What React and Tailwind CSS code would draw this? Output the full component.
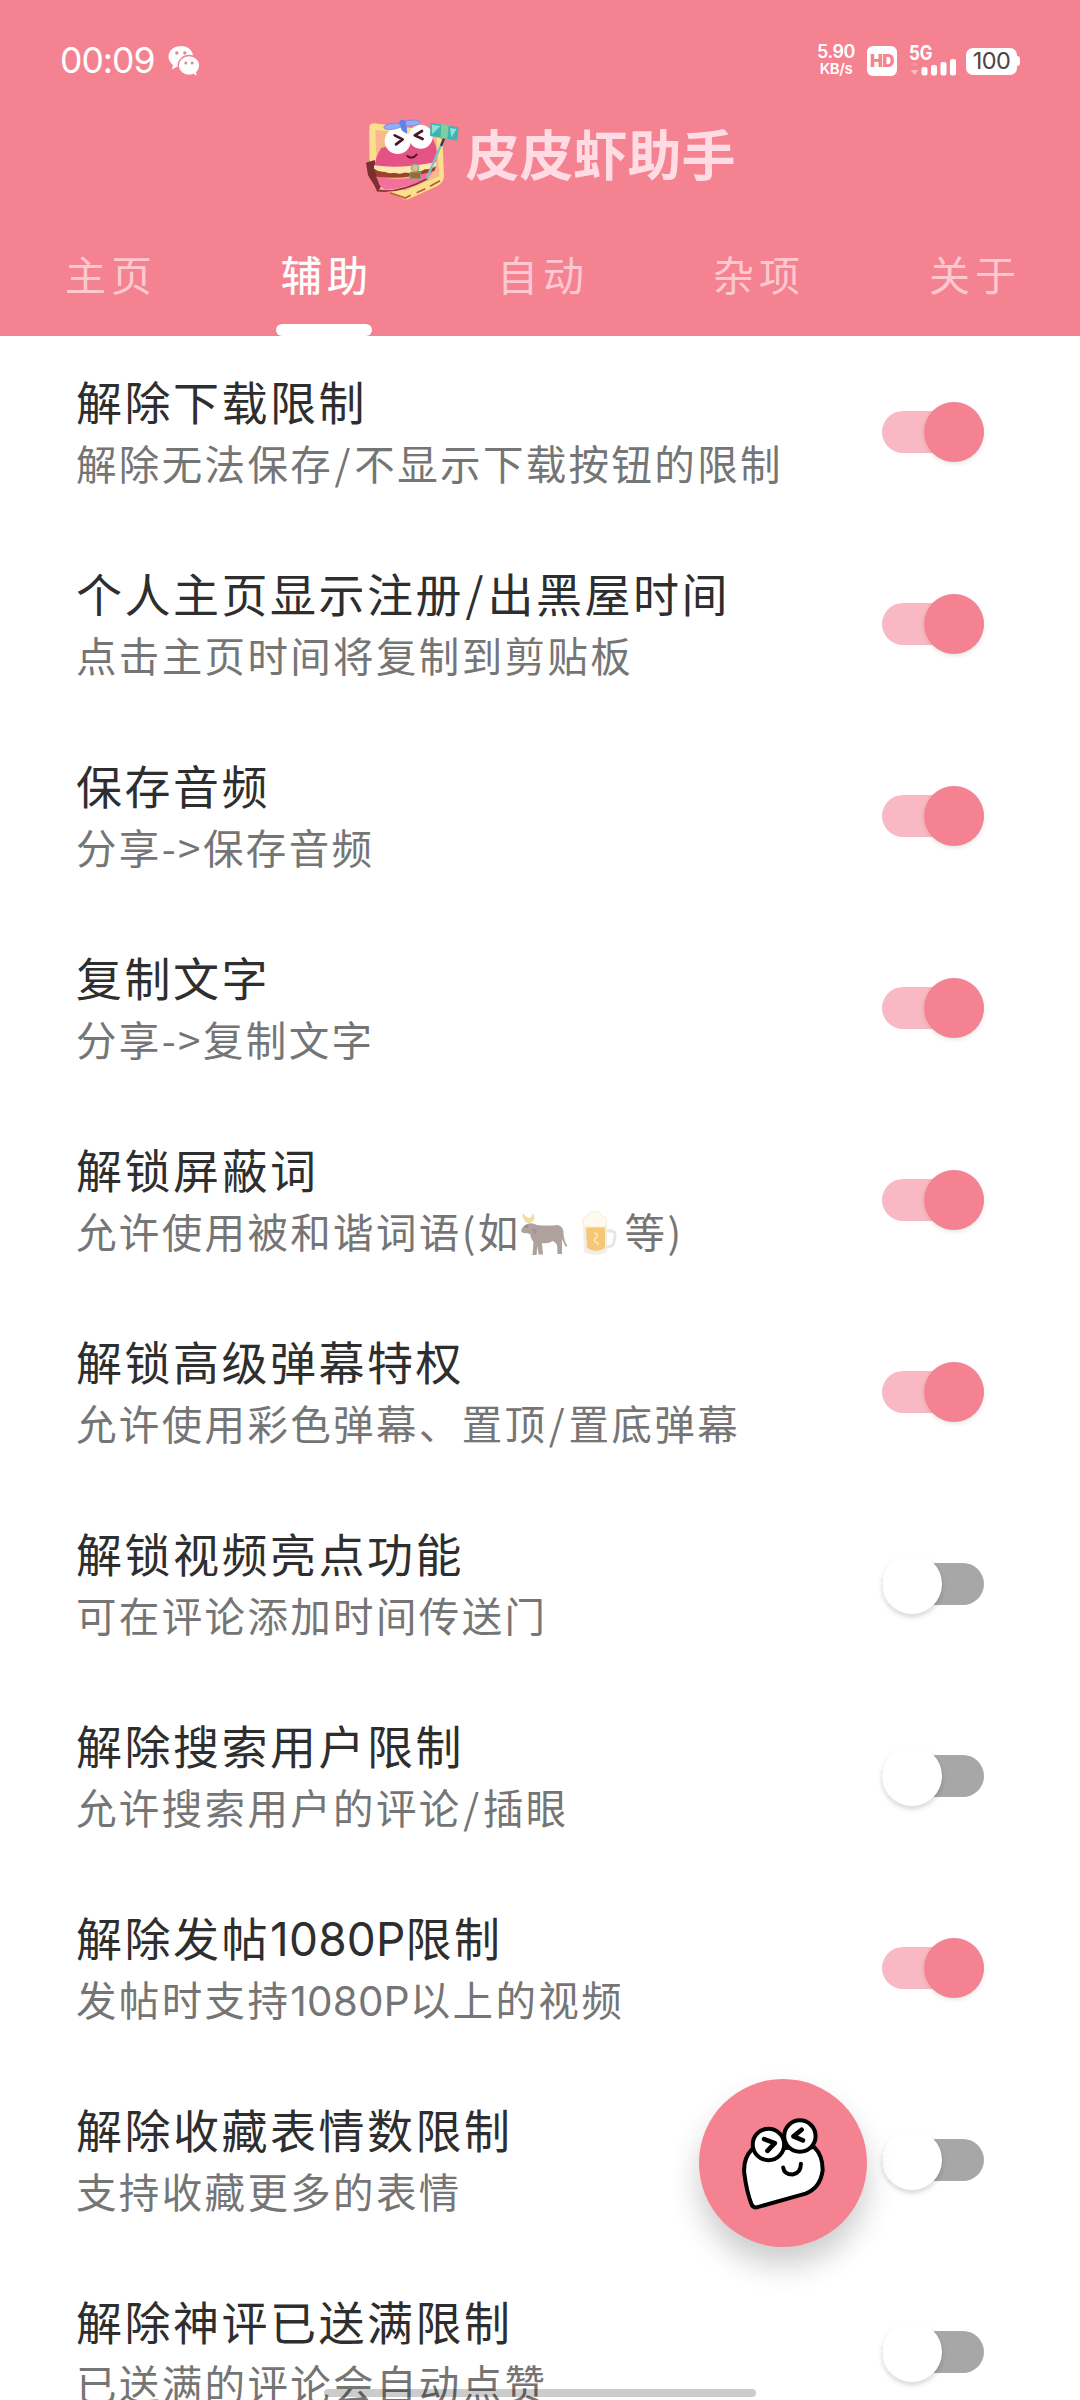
import React, { useState } from "react";

const tabs = ["主页", "辅助", "自动", "杂项", "关于"];

const OxIcon = () => (
  <svg
    viewBox="0 0 48 44"
    className="inline-block w-[48px] h-[44px] -ml-[1px] mr-[1px] -mt-[6px] opacity-60"
  >
    <path
      d="M1 19 Q2 14 7 12 Q12 10 17 13 Q27 14 38 13 Q44 15 43.500 22 Q44 29 47.500 34 L45.500 34.500 L42 27 L42 42 H37.500 L37 33 Q35 30 33 29 Q28 32 22 31 L23 42.500 H18.500 L17.500 34 L16.500 43 H12.500 L13.500 30 Q11 27 10 22 L6 21 Q3 22 1 19 Z"
      fill="#7b665f"
    />
    <path d="M13 16 Q18 16 16 22 Q13 21 12 17 Z" fill="#65524c" />
    <path
      d="M6 10 Q1 5 3 1 Q5 5 9 6 Q13 5 12 1 Q17 6 12 10 Q8 12 6 10 Z"
      fill="#e8c65a"
    />
    <circle cx="6.500" cy="14.500" r="1.100" fill="#2e2523" />
  </svg>
);

const BeerIcon = () => (
  <svg
    viewBox="0 0 38 46"
    className="inline-block w-[38px] h-[46px] ml-[11px] mr-[7px] -mt-[6px] opacity-70"
  >
    <path
      d="M26 20 H31 Q35.500 20 35 25 L34 31 Q33 36 26 36"
      fill="none"
      stroke="#dcdcdc"
      strokeWidth="3"
    />
    <path d="M3 12 H27 V41 Q15 47 4 41 Z" fill="#e9e7e0" />
    <path d="M6 16 H25 V37 Q16 43 7 37 Z" fill="#f2b13c" />
    <path d="M14 22 Q18 22 17 26 Q13 28 15 31 Q18 31 18 34" fill="none" stroke="#ffe0a0" strokeWidth="1.500" />
    <path
      d="M3 12 Q1 7 6 6 Q8 0 14 1 Q20 -1 22 5 Q28 6 26 12 V16 H4 Z"
      fill="#fff8e6"
      stroke="#efe6cf"
      strokeWidth="1"
    />
  </svg>
);

const initialItems = [
  { title: "解除下载限制", desc: "解除无法保存/不显示下载按钮的限制", on: true },
  { title: "个人主页显示注册/出黑屋时间", desc: "点击主页时间将复制到剪贴板", on: true },
  { title: "保存音频", desc: "分享->保存音频", on: true },
  { title: "复制文字", desc: "分享->复制文字", on: true },
  {
    title: "解锁屏蔽词",
    desc: (
      <>
        允许使用被和谐词语(如
        <OxIcon />
        <BeerIcon />
        等)
      </>
    ),
    on: true,
  },
  { title: "解锁高级弹幕特权", desc: "允许使用彩色弹幕、置顶/置底弹幕", on: true },
  { title: "解锁视频亮点功能", desc: "可在评论添加时间传送门", on: false },
  { title: "解除搜索用户限制", desc: "允许搜索用户的评论/插眼", on: false },
  { title: "解除发帖1080P限制", desc: "发帖时支持1080P以上的视频", on: true },
  { title: "解除收藏表情数限制", desc: "支持收藏更多的表情", on: false },
  { title: "解除神评已送满限制", desc: "已送满的评论会自动点赞", on: false },
];

// latin runs and slashes are spaced differently from the hanzi around them
const MixedText = ({ text }) => {
  if (typeof text !== "string") return text;
  return text.split(/([A-Z0-9]+|\/)/).map((part, i) => {
    if (part === "/") {
      return (
        <span key={i} className="px-[1.500px]">
          /
        </span>
      );
    }
    return i % 2 ? (
      <span
        key={i}
        className="font-['Inter',sans-serif] leading-none tracking-[0.200px]"
      >
        {part}
      </span>
    ) : (
      part
    );
  });
};

const WechatIcon = () => (
  <svg viewBox="0 0 32 32" className="w-[32px] h-[32px]">
    <path
      d="M13 1 C6 1 0.5 5.6 0.5 11.5 C0.5 15 2.3 18 5 20 L4 24.5 L9 21.8 C10.500 22.2 12 22.400 13.500 22.300 C20 22 25 17.500 25 11.500 C25 5.600 19.700 1 13 1 Z"
      fill="#fff"
    />
    <ellipse
      cx="21"
      cy="20.500"
      rx="10.800"
      ry="10"
      fill="#fff"
      stroke="#f58291"
      strokeWidth="1.300"
    />
    <path d="M25 28 L28.500 31 L28 26 Z" fill="#fff" />
    <g fill="#d98a94">
      <circle cx="8.800" cy="8" r="1.700" />
      <circle cx="16.800" cy="8" r="1.700" />
      <circle cx="17.800" cy="18" r="1.500" />
      <circle cx="24.200" cy="18" r="1.500" />
    </g>
  </svg>
);

const SignalIcon = () => (
  <svg viewBox="0 0 48 32" className="w-[48px] h-[32px] overflow-visible">
    <text
      x="0"
      y="15"
      fill="#fff"
      fontFamily="Inter"
      fontWeight="700"
      fontSize="19.500"
      textLength="23.500"
      lengthAdjust="spacingAndGlyphs"
    >
      5G
    </text>
    <path d="M1.500 21 L5.500 17 L9.500 21 Z" fill="#f793a0" />
    <path d="M1.500 25 H9.500 L5.500 30 Z" fill="#fbb9c2" />
    <g fill="#fff">
      <rect x="12.500" y="22" width="6" height="8.500" rx="2" />
      <rect x="22" y="20" width="6" height="10.500" rx="2" />
      <rect x="31.500" y="17" width="6" height="13.500" rx="2" />
      <rect x="41" y="14" width="6" height="16.500" rx="2" />
    </g>
  </svg>
);

const StatusBar = () => (
  <div className="flex h-[104px] items-center justify-between pt-[18px] pl-[60px] pr-[60px] text-white font-['Inter',sans-serif]">
    <div className="flex items-center">
      <span className="text-[35.500px] leading-none tracking-[-1px]">00:09</span>
      <span className="ml-[14px]">
        <WechatIcon />
      </span>
    </div>
    <div className="flex items-center">
      <div className="flex w-[38px] flex-col items-center font-semibold">
        <span className="text-[18px] leading-[22px] tracking-[-0.500px] -mt-[3px]">5.90</span>
        <span className="text-[15px] leading-[18px] tracking-[-0.500px] -mt-[3px]">KB/s</span>
      </div>
      <div className="ml-[12px] flex h-[30px] w-[30px] items-center justify-center rounded-[6px] bg-white text-[17px] leading-none font-black tracking-[-0.500px] text-[#f58291]">
        HD
      </div>
      <span className="ml-[12px]">
        <SignalIcon />
      </span>
      <div className="ml-[9px] flex h-[27px] w-[51px] items-center justify-center rounded-[7px] bg-white text-[23.500px] leading-none tracking-[-0.500px] text-[#4d4345]">
        100
      </div>
      <div className="h-[10px] w-[3px] rounded-r-[3px] bg-white" />
    </div>
  </div>
);

const Logo = () => (
  <svg viewBox="60 40 300 270" className="-mt-[5px] w-[100px] h-[90px]">
    {/* bread */}
    <path
      d="M88 84 Q90 74 102 74 L150 80 L290 98 L308 130 L312 236 Q310 252 292 262 L208 300 Q196 306 184 298 L120 268 L88 180 Z"
      fill="#fbdf8c"
    />
    <path d="M106 94 L290 112 L298 232 L196 276 L112 250 Z" fill="#f9b88c" />
    <path
      d="M150 282 L196 298 L212 290 M230 282 L256 270 M270 263 L300 246"
      fill="none"
      stroke="#c05a34"
      strokeWidth="5"
    />
    {/* burger */}
    <path
      d="M78 192 L104 184 L112 222 L124 262 L112 280 L104 262 L84 230 Z"
      fill="#7c2f30"
    />
    <path
      d="M104 206 Q106 172 124 148 L270 108 Q298 140 288 190 L240 212 L140 218 Z"
      fill="#e55286"
    />
    <path
      d="M108 232 Q190 258 286 210 L262 240 Q200 268 136 274 Q124 268 118 258 Z"
      fill="#f2709b"
    />
    <path
      d="M112 276 Q180 284 262 240"
      fill="none"
      stroke="#8d3040"
      strokeWidth="5"
    />
    <path
      d="M104 212 Q180 240 288 202 L284 216 Q190 246 110 234 Z"
      fill="#99432a"
    />
    <path
      d="M102 200 Q180 212 288 190 L288 202 Q270 216 254 210 Q244 222 228 215 Q212 228 196 219 Q180 230 166 221 Q148 228 138 219 Q118 222 102 210 Z"
      fill="#fde7ae"
    />
    {/* eyes */}
    <circle cx="173" cy="127" r="39" fill="#fff" />
    <circle cx="242" cy="114" r="36" fill="#fff" />
    <path
      d="M164 110 L188 122 L168 137 M246 97 L224 110 L248 121"
      fill="none"
      stroke="#4a1526"
      strokeWidth="8"
      strokeLinejoin="round"
      strokeLinecap="round"
    />
    <path
      d="M202 172 Q216 184 230 168"
      fill="none"
      stroke="#4a1526"
      strokeWidth="6"
      strokeLinecap="round"
    />
    {/* propeller */}
    <path d="M180 82 L200 80 L202 106 L186 96 Z" fill="#5f83e8" />
    <ellipse cx="158" cy="83" rx="27" ry="9" fill="#8fadf8" stroke="#6482e2" strokeWidth="2" transform="rotate(-8 158 83)" />
    <ellipse cx="215" cy="73" rx="25" ry="9" fill="#8fadf8" stroke="#6482e2" strokeWidth="2" transform="rotate(-4 215 73)" />
    <circle cx="188" cy="73" r="10" fill="#5f83e8" />
    {/* selfie stick */}
    <path d="M308 128 L260 240" stroke="#7cc3c6" strokeWidth="7" />
    <path d="M312 120 L303 142" stroke="#3c3a44" strokeWidth="7" />
    <path d="M272 72 L356 86 L352 126 L270 112 Z" fill="#3fb5b2" />
    <path d="M276 78 L302 82 L276 106 Z M330 88 L350 91 L334 116 Z" fill="#8fe0da" />
    <path d="M304 76 L326 80 L322 120 L302 117 Z" fill="#7fd0a0" />
    <circle cx="225" cy="208" r="11" fill="#f0b58a" stroke="#6dbd9e" strokeWidth="4" />
    <path d="M210 220 H242 V240 H210 Z" fill="#a8632f" stroke="#6dbd9e" strokeWidth="2" />
  </svg>
);

const Switch = ({ on, onClick }) => (
  <button
    role="switch"
    aria-checked={on}
    onClick={onClick}
    className={`flex h-[42px] w-[102px] items-center rounded-full cursor-pointer ${
      on ? "justify-end bg-[#f8b8c4]" : "justify-start bg-[#a7a7a7]"
    }`}
  >
    <span
      className={`h-[60px] w-[60px] shrink-0 rounded-full ${
        on
          ? "bg-[#f58291] shadow-[0_2px_4px_rgba(0,0,0,0.1)]"
          : "bg-white shadow-[0_3px_5px_rgba(0,0,0,0.16)]"
      }`}
    />
  </button>
);

const FrogIcon = () => (
  <svg viewBox="180 190 260 290" className="w-[87px] h-[97px]">
    <g stroke="#000" strokeWidth="12" strokeLinejoin="round" strokeLinecap="round">
      <path
        d="M216 292 Q188 322 193 366 Q200 420 214 456 Q218 468 230 466 L376 425 Q420 408 427 356 Q428 312 402 286 Z"
        fill="#fff"
      />
      <circle cx="265" cy="278" r="47" fill="#fff" />
      <circle cx="359" cy="253" r="47" fill="#fff" />
      <path d="M309 347 Q312 368 337 368 Q362 364 362 336" fill="none" />
      <path d="M252 262 L284 274 L262 297 M364 234 L340 254 L368 266" fill="none" strokeWidth="14" />
    </g>
  </svg>
);

export default function App() {
  const [active, setActive] = useState(1);
  const [items, setItems] = useState(initialItems);

  const toggle = (index) => {
    setItems(
      items.map((item, i) => (i === index ? { ...item, on: !item.on } : item))
    );
  };

  return (
    <div className="relative h-[2400px] w-[1080px] overflow-hidden bg-white font-['Noto_Sans_CJK_SC',sans-serif]">
      <header className="bg-[#f58291]">
        <StatusBar />
        <div className="flex h-[110px] items-center justify-center pl-[15px]">
          <Logo />
          <h1 className="ml-[6px] -mt-[12px] text-[54px] leading-none font-bold text-[#ffdbe3]">
            皮皮虾助手
          </h1>
        </div>
        <nav className="grid h-[122px] grid-cols-5">
          {tabs.map((tab, i) => (
            <button
              key={tab}
              onClick={() => setActive(i)}
              className={`flex flex-col items-center justify-end cursor-pointer ${
                i === active
                  ? "text-white [-webkit-text-stroke:0.4px_white]"
                  : "text-[#fdc8d0]"
              }`}
            >
              <span className="pl-[6px] text-[41px] leading-[60px] tracking-[5px]">
                {tab}
              </span>
              <span
                className={`mt-[21px] h-[12px] w-[96px] rounded-[6px] ${
                  i === active ? "bg-white" : ""
                }`}
              />
            </button>
          ))}
        </nav>
      </header>

      <main>
        {items.map((item, i) => (
          <div
            key={item.title}
            className="flex h-[192px] items-center justify-between pl-[76px] pr-[96px]"
          >
            <div className="-mt-[5px] whitespace-nowrap">
              <div className="h-[66px] text-[46px] leading-[66px] tracking-[2.500px] text-[#2e2e2e]">
                <MixedText text={item.title} />
              </div>
              <div className="h-[59px] text-[40.500px] leading-[59px] tracking-[2.350px] text-[#757575]">
                <MixedText text={item.desc} />
              </div>
            </div>
            <Switch on={item.on} onClick={() => toggle(i)} />
          </div>
        ))}
      </main>

      <button className="absolute left-[699px] top-[2079px] flex h-[168px] w-[168px] items-center justify-center rounded-full bg-[#f58291] shadow-[0_18px_30px_rgba(0,0,0,0.2)] cursor-pointer">
        <FrogIcon />
      </button>
      <div className="absolute bottom-[3px] left-[324px] h-[8px] w-[432px] rounded-full bg-black/20" />
    </div>
  );
}
